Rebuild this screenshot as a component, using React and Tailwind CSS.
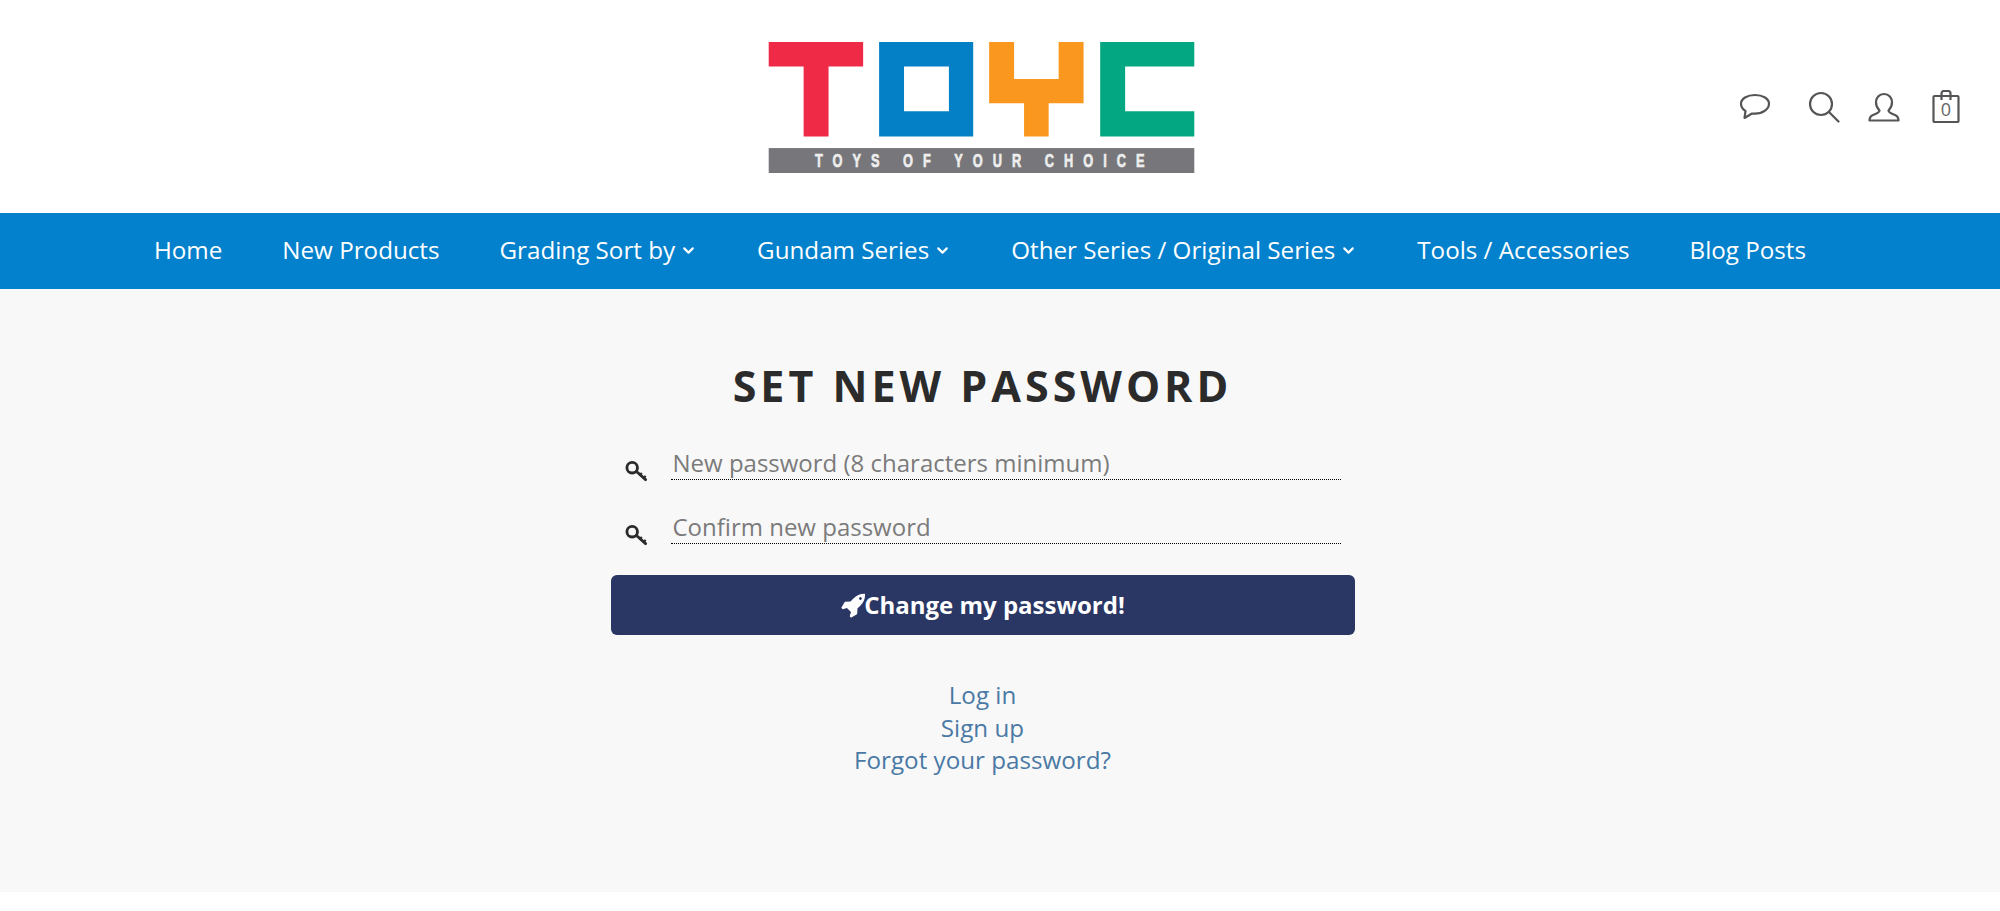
import { ChevronDown } from "lucide-react";

const navItems = [
  { label: "Home" },
  { label: "New Products" },
  { label: "Grading Sort by", caret: true },
  { label: "Gundam Series", caret: true },
  { label: "Other Series / Original Series", caret: true },
  { label: "Tools / Accessories" },
  { label: "Blog Posts" },
];

function Logo() {
  return (
    <svg viewBox="83 66 1280 394" className="w-[427px] h-[131px]">
      {/* T */}
      <path d="M83 66H367V140H263V350H188V140H83Z" fill="#ee2a47" />
      {/* O */}
      <path fillRule="evenodd" d="M415 66H698V350H415ZM490 140V274H625V140Z" fill="#0481c6" />
      {/* Y */}
      <path d="M746 66H821V177H955V66H1030V250H925V350H851V250H746Z" fill="#f9971f" />
      {/* C */}
      <path d="M1080 66H1363V140H1155V274H1363V350H1080Z" fill="#03a882" />
      <rect x="83" y="385" width="1280" height="75" fill="#77777b" />
      <text
        transform="translate(222 443) scale(.7 1)"
        fill="#eeeeee"
        stroke="#eeeeee"
        strokeWidth="2"
        fontFamily="'Liberation Sans', sans-serif"
        fontWeight="700"
        fontSize="55"
        letterSpacing="43"
      >
        TOYS OF YOUR CHOICE
      </text>
    </svg>
  );
}

function ChatIcon() {
  return (
    <svg viewBox="0 0 32 28" className="w-8 h-7" fill="none" stroke="#555" strokeWidth="2.200">
      <path d="M16 2C8 2 2 5.800 2 10.800C2 14 4 16.500 6.500 18L5.500 25L13 20.500C14 20.600 15 20.700 16 20.700C24 20.700 30 16 30 10.800C30 5.800 24 2 16 2Z" strokeLinejoin="round" />
    </svg>
  );
}

function SearchIcon() {
  return (
    <svg viewBox="0 0 32 32" className="w-8 h-8" fill="none" stroke="#555" strokeWidth="2.200">
      <circle cx="13" cy="13" r="11" />
      <path d="M21 21L30.500 30.500" strokeLinecap="round" />
    </svg>
  );
}

function UserIcon() {
  return (
    <svg viewBox="0 0 32 30" className="w-8 h-[30px]" fill="none" stroke="#555" strokeWidth="2.200">
      <path d="M16 2C11 2 8 6 8 10.500C8 14 9.500 16.500 11.500 18.500C11.500 20.500 9 21.500 5 23C2.500 24 1.500 25.500 1.500 28.500H30.500C30.500 25.500 29.500 24 27 23C23 21.500 20.500 20.500 20.500 18.500C22.500 16.500 24 14 24 10.500C24 6 21 2 16 2Z" strokeLinejoin="round" />
    </svg>
  );
}

function BagIcon() {
  return (
    <div className="relative w-[28px] h-[33px]">
      <svg viewBox="0 0 28 33" className="w-[28px] h-[33px]" fill="none" stroke="#555" strokeWidth="2.200">
        <rect x="1.500" y="6" width="25" height="26" rx="1" />
        <path d="M9.500 10V3.500C9.500 2 10.500 1 12 1H16C17.500 1 18.500 2 18.500 3.500V10" />
      </svg>
      <span className="absolute inset-x-0 top-[9px] text-center text-[18px] leading-[20px] text-[#666]">0</span>
    </div>
  );
}

function KeyIcon() {
  return (
    <svg viewBox="0 0 24 24" className="w-[23px] h-[23px] shrink-0" fill="none" stroke="#2b2b2b" strokeWidth="3">
      <circle cx="7.500" cy="8" r="5.500" />
      <path d="M12 12L21.500 20.500" strokeLinecap="round" />
      <path d="M17.500 13.500L15.500 16M21.500 16.500L19.500 19" strokeWidth="2.200" />
    </svg>
  );
}

function RocketIcon() {
  return (
    <svg viewBox="0 0 1792 1792" className="w-[26px] h-[26px] shrink-0 -mr-[2px]" fill="currentColor">
      <path d="M1504 448q0-40-28-68t-68-28-68 28-28 68 28 68 68 28 68-28 28-68zm224-288q0 249-75.500 430.500t-253.500 360.500q-81 80-195 176l-20 379q-2 16-16 26l-384 224q-7 4-16 4-12 0-23-9l-64-64q-13-14-8-32l85-276-281-281-276 85q-3 1-9 1-14 0-23-9l-64-64q-17-19-5-39l224-384q10-14 26-16l379-20q96-114 176-195 188-187 358-258t431-71q14 0 24 9.500t10 22.500z" />
    </svg>
  );
}

function PasswordField({ placeholder }) {
  return (
    <div className="flex items-end gap-[23px] pl-[14px] pr-[14px]">
      <div className="-mb-[3px]">
        <KeyIcon />
      </div>
      <input
        type="password"
        placeholder={placeholder}
        className="flex-1 h-[39px] pt-[4px] bg-transparent border-b border-dotted border-black px-[2px] text-[24px] leading-[32px] outline-none placeholder:text-[#7b7b7b]"
      />
    </div>
  );
}

export default function App() {
  return (
    <div className="min-h-[911px] bg-white font-['Open_Sans',sans-serif]">
      {/* Header */}
      <header className="relative h-[213px] flex justify-center pt-[42px] pr-[38px]">
        <Logo />
        <div className="absolute top-[90px] left-[1739px] flex items-center">
          <div className="w-[69px]"><ChatIcon /></div>
          <div className="w-[60px]"><SearchIcon /></div>
          <div className="w-[64px]"><UserIcon /></div>
          <BagIcon />
        </div>
      </header>

      {/* Nav */}
      <nav className="h-[76px] pb-[2px] bg-[#0481cc] flex items-center justify-center gap-[60px] pr-[40px]">
        {navItems.map((item) => (
          <a key={item.label} href="#" className="flex items-center gap-[5px] text-[24.200px] leading-[32px] font-medium text-white">
            {item.label}
            {item.caret && <ChevronDown size={17} strokeWidth={3} />}
          </a>
        ))}
      </nav>

      {/* Main */}
      <main className="h-[603px] bg-[#f8f8f8] pr-[35px] flex flex-col items-center">
        <h1 className="mt-[68px] text-[43px] leading-[58px] font-bold tracking-[4px] text-[#2b2b2b]">
          SET NEW PASSWORD
        </h1>
        <form className="mt-[26px] w-[744px] flex flex-col">
          <PasswordField placeholder="New password (8 characters minimum)" />
          <div className="mt-[25px]">
            <PasswordField placeholder="Confirm new password" />
          </div>
          <button
            type="button"
            className="mt-[31px] h-[60px] pb-[1px] w-full rounded-[6px] bg-[#2a3663] text-white text-[24px] font-bold flex items-center justify-center"
          >
            <RocketIcon />
            Change my password!
          </button>
        </form>
        <div className="mt-[44px] flex flex-col items-center text-[24.200px] leading-[32.700px] text-[#4a79a5]">
          <a href="#">Log in</a>
          <a href="#">Sign up</a>
          <a href="#">Forgot your password?</a>
        </div>
      </main>
    </div>
  );
}
